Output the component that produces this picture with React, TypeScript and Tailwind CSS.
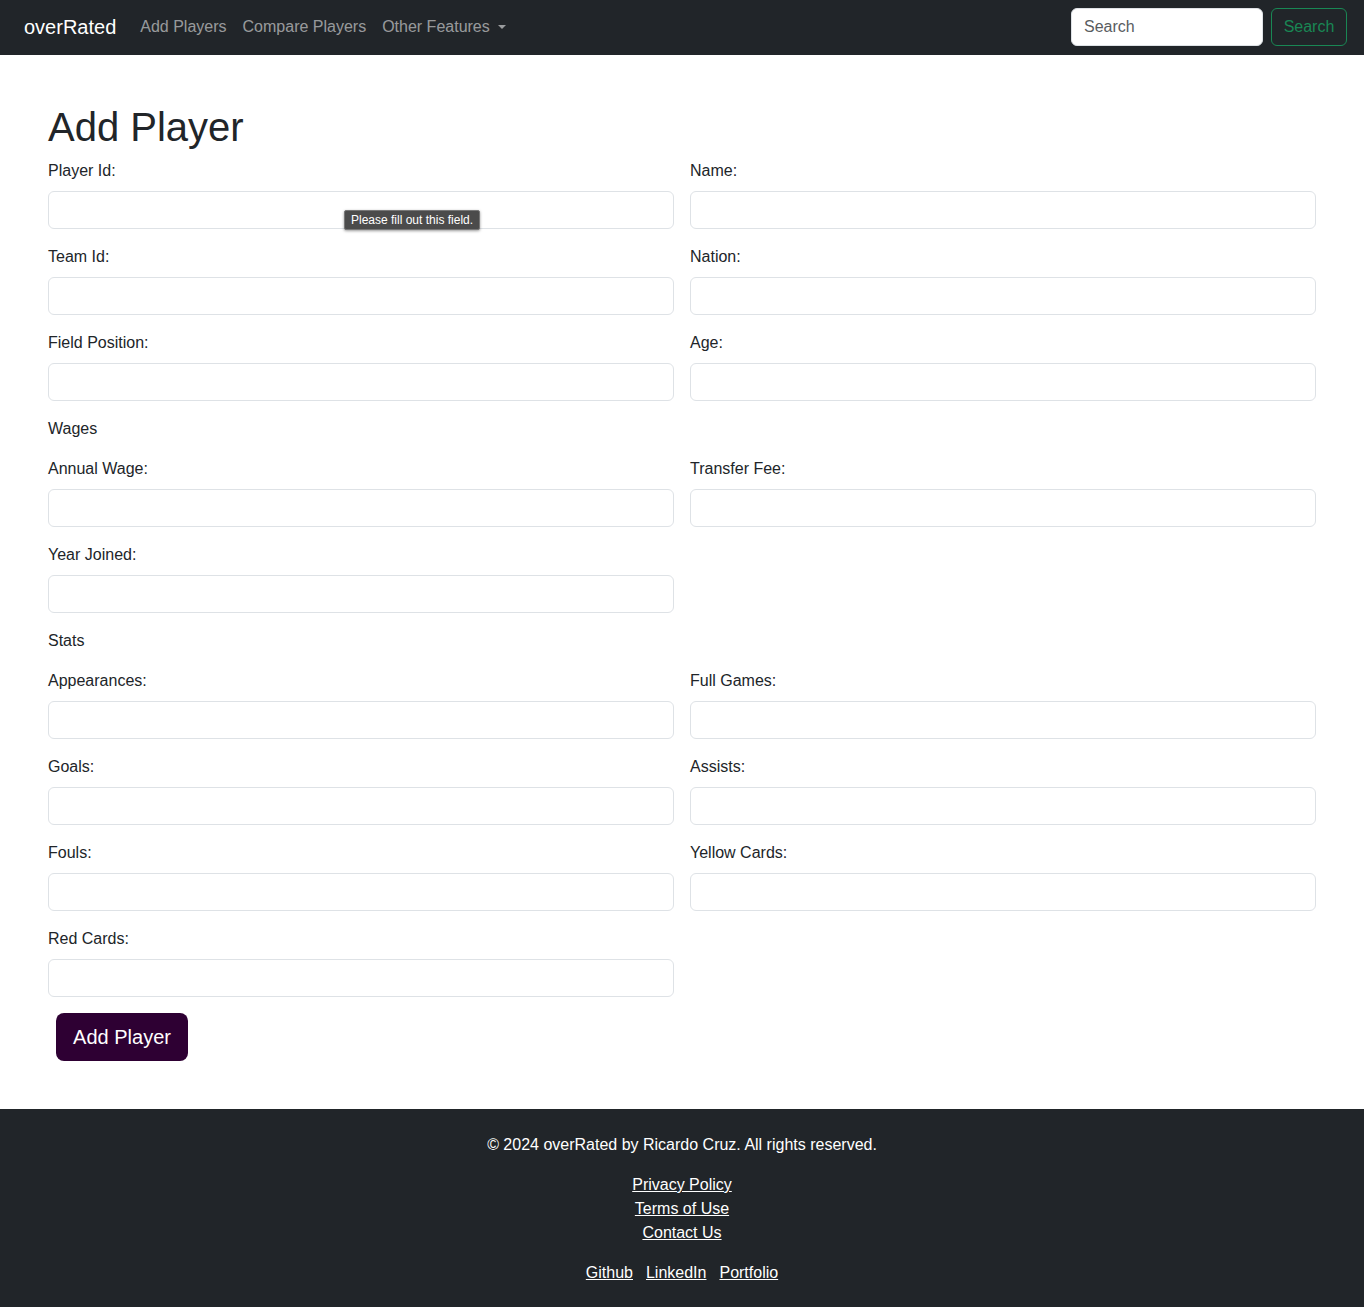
import React from "react";

const Field = ({ label }: { label: string }) => (
  <div className="mb-4 flex flex-col">
    <label className="mb-2 text-[16px] leading-6 text-[#212529]">{label}</label>
    <input className="h-[38px] w-full rounded-[6px] border border-[#dee2e6] bg-white px-3 outline-none" />
  </div>
);

export default function App() {
  return (
    <div className="min-h-[1307px] bg-white text-[#212529]" style={{ fontFamily: '"Liberation Sans", Arial, sans-serif' }}>
      <nav className="flex h-[55px] items-center justify-between bg-[#212529] pb-[2px] pl-6 pr-[17px]">
        <div className="flex items-center">
          <span className="mr-6 text-[20px] leading-[30px] text-white">overRated</span>
          <div className="flex items-center gap-4 text-[16px] text-[rgba(255,255,255,0.55)]">
            <span>Add Players</span>
            <span>Compare Players</span>
            <span className="flex items-center">
              Other Features
              <span className="ml-[8px] inline-block h-0 w-0 border-x-[4px] border-t-[4px] border-x-transparent border-t-[rgba(255,255,255,0.55)]" />
            </span>
          </div>
        </div>
        <div className="flex items-center gap-2">
          <div className="flex h-[38px] w-[192px] items-center rounded-[6px] border border-[#dee2e6] bg-white px-3 text-[16px] text-[#595c5f]">
            Search
          </div>
          <div className="flex h-[38px] w-[76px] items-center justify-center rounded-[6px] border border-[#198754] text-[16px] text-[#198754]">
            Search
          </div>
        </div>
      </nav>

      <main className="px-12 pb-12 pt-12">
        <h1 className="mb-2 text-[40px] font-medium leading-[48px]">Add Player</h1>
        <div className="grid grid-cols-2 gap-x-4">
          <div className="relative">
            <Field label="Player Id:" />
            <div className="absolute left-[296px] top-[51px] rounded-[2px] border border-[#777] bg-[#4b4b4b] px-[6px] py-[2px] text-[12px] leading-[14px] text-white shadow-[0_1px_3px_rgba(0,0,0,0.4)]">
              Please fill out this field.
            </div>
          </div>
          <Field label="Name:" />
          <Field label="Team Id:" />
          <Field label="Nation:" />
          <Field label="Field Position:" />
          <Field label="Age:" />
        </div>
        <div className="mb-4 text-[16px] leading-6">Wages</div>
        <div className="grid grid-cols-2 gap-x-4">
          <Field label="Annual Wage:" />
          <Field label="Transfer Fee:" />
          <Field label="Year Joined:" />
        </div>
        <div className="mb-4 text-[16px] leading-6">Stats</div>
        <div className="grid grid-cols-2 gap-x-4">
          <Field label="Appearances:" />
          <Field label="Full Games:" />
          <Field label="Goals:" />
          <Field label="Assists:" />
          <Field label="Fouls:" />
          <Field label="Yellow Cards:" />
          <Field label="Red Cards:" />
        </div>
        <button className="ml-2 h-[48px] w-[132px] rounded-[8px] bg-[#2e0033] text-[20px] text-white">Add Player</button>
      </main>

      <footer className="flex h-[198px] flex-col items-center bg-[#212529] pt-6 text-[16px] text-white">
        <p className="leading-6">© 2024 overRated by Ricardo Cruz. All rights reserved.</p>
        <div className="mt-4 flex flex-col items-center leading-6">
          <a className="underline">Privacy Policy</a>
          <a className="underline">Terms of Use</a>
          <a className="underline">Contact Us</a>
        </div>
        <div className="mt-4 flex gap-[13px] leading-6">
          <a className="underline">Github</a>
          <a className="underline">LinkedIn</a>
          <a className="underline">Portfolio</a>
        </div>
      </footer>
    </div>
  );
}
